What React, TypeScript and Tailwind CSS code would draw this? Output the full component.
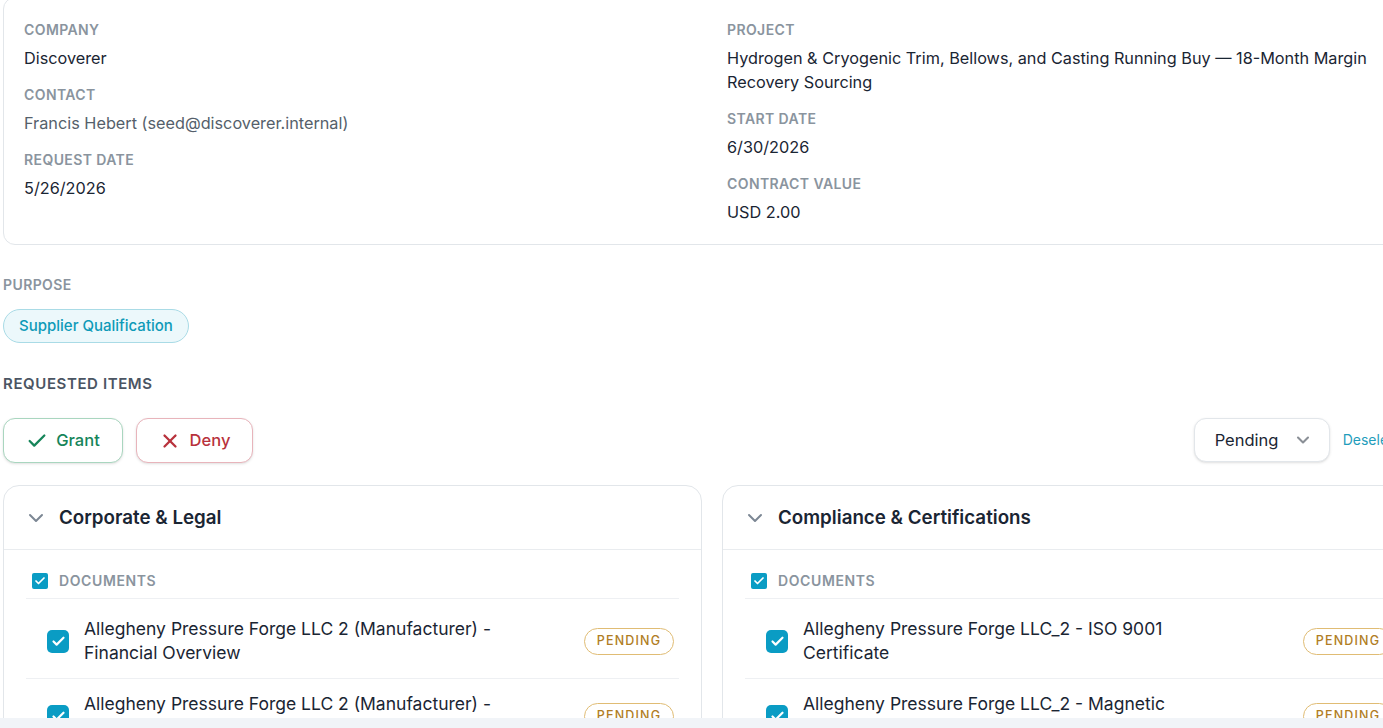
import { Check, ChevronDown, X } from "lucide-react";
import type { ReactNode } from "react";

function Label({ children }: { children: ReactNode }) {
  return <div className="mb-2 h-4 text-sm leading-4 font-semibold tracking-[0.4px] text-[#8a949e]">{children}</div>;
}

function Field({ label, value, muted }: { label: string; value: string; muted?: boolean }) {
  return (
    <div className="mb-[17px] last:mb-0">
      <Label>{label}</Label>
      <div className={`text-[16.25px] leading-6 ${muted ? "text-[#555f6b]" : "text-[#1a2533]"}`}>{value}</div>
    </div>
  );
}

function Tick({ size, icon }: { size: "sm" | "lg"; icon: number }) {
  return (
    <span
      className={
        size === "sm"
          ? "flex h-4 w-4 shrink-0 items-center justify-center rounded-[2px] bg-[#0a9cc4] text-white"
          : "flex h-[23px] w-[22px] shrink-0 items-center justify-center rounded-[5px] bg-[#0a9cc4] text-white"
      }
    >
      <Check size={icon} strokeWidth={3.5} />
    </span>
  );
}

function PendingPill() {
  return (
    <span className="mt-px flex h-[27px] w-[90px] shrink-0 items-center justify-center rounded-full border border-[#e0bc74] text-[12.5px] font-medium tracking-[1.15px] text-[#b07d24]">
      PENDING
    </span>
  );
}

function Item({ lines, first }: { lines: string[]; first?: boolean }) {
  return (
    <div className={`flex items-center border-b border-[#eef0f3] pr-[5px] pb-[13px] pl-[21px] ${first ? "pt-[18px]" : "pt-[13px]"}`}>
      <Tick size="lg" icon={15} />
      <div className="ml-[15px] flex-1 text-[17.5px] leading-6 text-[#1a2533]">
        {lines.map((l) => (
          <div key={l}>{l}</div>
        ))}
      </div>
      <PendingPill />
    </div>
  );
}

function Section({ title, items }: { title: string; items: string[][] }) {
  return (
    <section className="h-[300px] rounded-t-2xl border border-[#e2e6ea] bg-white">
      <div className="flex h-[64px] items-center gap-[11px] border-b border-[#e9ecef] pl-5">
        <ChevronDown size={24} className="text-[#7c8794]" />
        <h3 className="text-[18.75px] leading-7 font-semibold text-[#1a2533]">{title}</h3>
      </div>
      <div className="px-[22px]">
        <div className="flex h-[49px] items-center gap-[11px] border-b border-[#eef0f3] pt-[14px] pl-[6px]">
          <Tick size="sm" icon={12} />
          <span className="text-sm font-semibold tracking-[0.6px] text-[#8a949e]">DOCUMENTS</span>
        </div>
        {items.map((lines, i) => (
          <Item key={lines.join()} lines={lines} first={i === 0} />
        ))}
      </div>
    </section>
  );
}

export default function App() {
  return (
    <div className="flex h-[728px] w-[1383px] flex-col overflow-hidden bg-white [font-family:Inter,sans-serif]">
      <main className="min-h-0 flex-1 overflow-hidden">
        <div className="-mt-[3px] ml-[3px] w-[1418px]">
          <div className="grid grid-cols-2 gap-x-[30px] rounded-xl border border-[#e2e6ea] bg-white px-5 pt-6 pb-5">
            <div>
              <Field label="COMPANY" value="Discoverer" />
              <Field label="CONTACT" value="Francis Hebert (seed@discoverer.internal)" muted />
              <Field label="REQUEST DATE" value="5/26/2026" />
            </div>
            <div>
              <Field label="PROJECT" value="Hydrogen & Cryogenic Trim, Bellows, and Casting Running Buy — 18-Month Margin Recovery Sourcing" />
              <Field label="START DATE" value="6/30/2026" />
              <Field label="CONTRACT VALUE" value="USD 2.00" />
            </div>
          </div>

          <div className="mt-8">
            <Label>PURPOSE</Label>
            <div className="mt-2 inline-flex h-[34px] items-center rounded-full border border-[#a9dbe6] bg-[#ecf8fb] px-[15px] text-[15px] font-medium text-[#0e9ab8]">
              Supplier Qualification
            </div>
          </div>

          <h2 className="mt-[33px] h-4 text-[15px] leading-4 font-semibold tracking-[0.6px] text-[#4b5563]">REQUESTED ITEMS</h2>

          <div className="mt-[26px] flex h-[45px] items-start">
            <button className="flex h-[45px] w-[120px] items-center justify-center gap-[8px] rounded-xl border border-[#a9d6bf] bg-white text-[16.5px] font-medium text-[#16855a] shadow-sm">
              <Check size={22} strokeWidth={2.5} />
              Grant
            </button>
            <button className="ml-[13px] flex h-[45px] w-[117px] items-center justify-center gap-[9px] rounded-xl border border-[#e8b4bb] bg-white text-[16.5px] font-medium text-[#b8323c] shadow-sm">
              <X size={22} strokeWidth={2.5} />
              Deny
            </button>
            <button className="ml-auto flex h-[44px] w-[136px] items-center justify-between rounded-xl border border-[#e2e6ea] bg-white pr-[16px] pl-5 text-[16.5px] text-[#1a2533] shadow-sm">
              Pending
              <ChevronDown size={20} strokeWidth={2.5} className="text-[#8a8f96]" />
            </button>
            <a className="ml-[13px] flex h-[44px] items-center text-sm whitespace-nowrap text-[#1f9dbb]">Deselect All</a>
          </div>

          <div className="mt-[22px] grid grid-cols-2 gap-5">
            <Section
              title="Corporate & Legal"
              items={[
                ["Allegheny Pressure Forge LLC 2 (Manufacturer) -", "Financial Overview"],
                ["Allegheny Pressure Forge LLC 2 (Manufacturer) -", "Tax Certificate"],
              ]}
            />
            <Section
              title="Compliance & Certifications"
              items={[
                ["Allegheny Pressure Forge LLC_2 - ISO 9001", "Certificate"],
                ["Allegheny Pressure Forge LLC_2 - Magnetic", "Particle Report"],
              ]}
            />
          </div>
        </div>
      </main>
      <div className="h-[10px] shrink-0 bg-[#f1f4f8]" />
    </div>
  );
}
